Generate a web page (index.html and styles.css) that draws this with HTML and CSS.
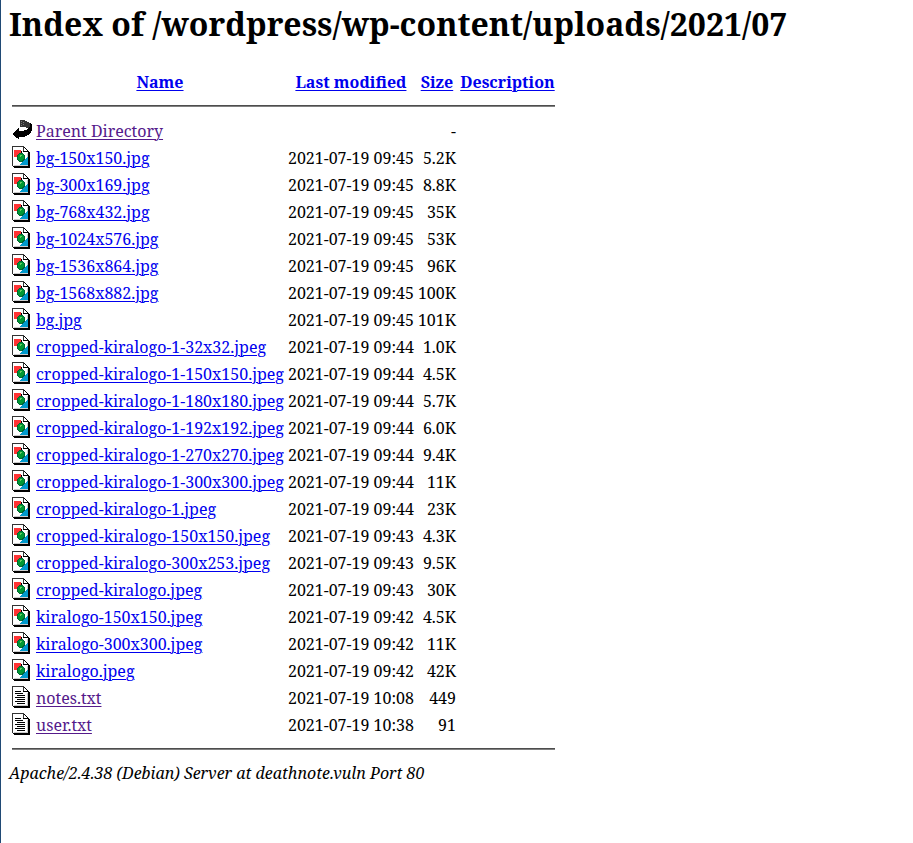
FILE: index.html
```
<!DOCTYPE html>
<html lang="en">
<head>
<meta charset="utf-8">
<title>Index of /wordpress/wp-content/uploads/2021/07</title>
<link rel="stylesheet" href="styles.css">
</head>
<body>
<svg class="sprite" aria-hidden="true">
<symbol id="back" viewBox="0 0 20 22">
<path fill="#333" d="M8 1h5v1h2v1h2v1h1v4h-1v1h-3v-1h-6z"/>
<path fill="#777" d="M9 2h1v1h-1zM11 3h1v1h-1zM9 4h1v1h-1zM9 6h1v1h-1zM11 5h1v1h-1z"/>
<path d="M0 15L7 9V12H10C14 11 17 10 18 7V4L20 6V11C19 15 16 17 11 18H7V20.500z"/>
</symbol>
<symbol id="page" viewBox="0 0 20 22">
<path fill="#fff" d="M1 1h11l4 5v14h-15z"/>
<path fill="#ccc" d="M15 7h1v13h-1zM2 19h14v1h-14z"/>
<path fill="#333" d="M0 0h12v1h-11v19h-1zM11 1h1v4h-1z"/>
<path d="M12 1h1v1h-1zM13 2h1v1h-1zM14 3h1v1h-1zM15 4h1v1h-1zM11 5h6v1h1v16h-16v-1h-1v-1h15v-14h-5z"/>
</symbol>
<symbol id="image" viewBox="0 0 20 22">
<use href="#page"/>
<path d="M9 5h1v3h-1z"/>
<path fill="#f33" d="M2 4h7v7h-7z"/>
<path fill="#09c" d="M15 11h1v8h-8v-1h1v-1h1v-1h1v-1h1v-1h1v-1h1v-1h1z"/>
<path fill="#063" d="M7 7h4v1h1v1h1v5h-1v1h-1v1h-4v-1h-1v-1h-1v-5h1v-1h1z"/>
<path fill="#093" d="M7 8h4v1h1v4h-1v1h-1v1h-3v-1h-1v-5h1z"/>
<path fill="#6c6" d="M8 9h2v1h-1v1h-1z"/>
</symbol>
<symbol id="text" viewBox="0 0 20 22">
<use href="#page"/>
<path d="M3 5h6v1h-6zM3 7h8v1h-8zM5 9h8v1h-8zM3 11h10v1h-10zM5 13h8v1h-8zM3 15h10v1h-10zM5 17h8v1h-8z"/>
</symbol>
</svg>
<h1>Index of /wordpress/wp-content/uploads/2021/07</h1>
<table>
<thead>
<tr><th class="icon"></th><th><a href="#">Name</a></th><th><a href="#">Last modified</a></th><th><a href="#">Size</a></th><th class="desc"><a href="#">Description</a></th></tr>
<tr><th class="rule" colspan="5"><hr></th></tr>
</thead>
<tbody id="files"></tbody>
<tfoot><tr><th class="rule" colspan="5"><hr></th></tr></tfoot>
</table>
<address>Apache/2.4.38 (Debian) Server at deathnote.vuln Port 80</address>
<script src="files.js"></script>
</body>
</html>
```
FILE: styles.css
```
body {
  margin: 0;
  min-height: 843px;
  box-sizing: border-box;
  padding: 2px 8px 0;
  border-left: 1px solid #204a75;
  background: #fff;
  color: #000;
  font: 16px/23px "Noto Serif", serif;
}
.sprite { display: none; }
h1 {
  margin: 0 0 21px;
  font-size: 32px;
  line-height: 44px;
}
table { border-spacing: 2px; }
td, th { padding: 2px 1px 0; white-space: nowrap; }
.icon { width: 20px; padding: 1px; vertical-align: top; }
.rule { padding: 1px; }
.desc { min-width: 95px; }
.icon svg {
  display: block;
  width: 20px;
  height: 22px;
  shape-rendering: crispEdges;
}
.num { text-align: right; }
a {
  color: #00e;
  text-decoration-thickness: 1px;
  text-underline-offset: 2px;
}
a.visited { color: #551a8b; }
hr {
  margin: 8px 0;
  height: 0;
  border: 0;
  border-top: 1px solid #4d4d4d;
  border-bottom: 1px solid #808080;
}
address { margin-top: 1px; }
```
FILE: files.js
```
const files = [
  ["back", "Parent Directory", "", "-"],
  ["image", "bg-150x150.jpg", "09:45", "5.2K"],
  ["image", "bg-300x169.jpg", "09:45", "8.8K"],
  ["image", "bg-768x432.jpg", "09:45", "35K"],
  ["image", "bg-1024x576.jpg", "09:45", "53K"],
  ["image", "bg-1536x864.jpg", "09:45", "96K"],
  ["image", "bg-1568x882.jpg", "09:45", "100K"],
  ["image", "bg.jpg", "09:45", "101K"],
  ["image", "cropped-kiralogo-1-32x32.jpeg", "09:44", "1.0K"],
  ["image", "cropped-kiralogo-1-150x150.jpeg", "09:44", "4.5K"],
  ["image", "cropped-kiralogo-1-180x180.jpeg", "09:44", "5.7K"],
  ["image", "cropped-kiralogo-1-192x192.jpeg", "09:44", "6.0K"],
  ["image", "cropped-kiralogo-1-270x270.jpeg", "09:44", "9.4K"],
  ["image", "cropped-kiralogo-1-300x300.jpeg", "09:44", "11K"],
  ["image", "cropped-kiralogo-1.jpeg", "09:44", "23K"],
  ["image", "cropped-kiralogo-150x150.jpeg", "09:43", "4.3K"],
  ["image", "cropped-kiralogo-300x253.jpeg", "09:43", "9.5K"],
  ["image", "cropped-kiralogo.jpeg", "09:43", "30K"],
  ["image", "kiralogo-150x150.jpeg", "09:42", "4.5K"],
  ["image", "kiralogo-300x300.jpeg", "09:42", "11K"],
  ["image", "kiralogo.jpeg", "09:42", "42K"],
  ["text", "notes.txt", "10:08", "449"],
  ["text", "user.txt", "10:38", "91"]
];
document.getElementById("files").innerHTML = files.map(([icon, name, time, size]) =>
  `<tr><td class="icon"><svg><use href="#${icon}"/></svg></td>` +
  `<td><a href="#"${icon === "image" ? "" : ' class="visited"'}>${name}</a></td>` +
  `<td class="num">${time && "2021-07-19 " + time}</td><td class="num">${size}</td><td></td></tr>`
).join("");
```
